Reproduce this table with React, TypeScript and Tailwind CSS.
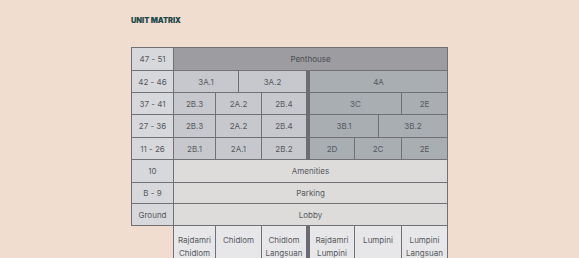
const border = "border-r border-b border-[#707075]";

const Cell = ({
  w,
  bg,
  children,
  className = "",
}: {
  w: string;
  bg: string;
  children?: React.ReactNode;
  className?: string;
}) => (
  <div className={`${w} ${bg} ${border} flex items-center justify-center shrink-0 ${className}`}>
    {children}
  </div>
);

const Divider = () => <div className="w-[4px] shrink-0 bg-[#6c6c72] border-b border-[#6c6c72]" />;

const leftRows = [
  { label: "37 - 41", h: "h-[22px]", left: ["2B.3", "2A.2", "2B.4"], right: [["3C", "w-[92px]"], ["2E", "w-[46px]"]] },
  { label: "27 - 36", h: "h-[23px]", left: ["2B.3", "2A.2", "2B.4"], right: [["3B.1", "w-[69px]"], ["3B.2", "w-[69px]"]] },
  { label: "11 - 26", h: "h-[22px]", left: ["2B.1", "2A.1", "2B.2"], right: [["2D", "w-[45px]"], ["2C", "w-[47px]"], ["2E", "w-[46px]"]] },
];

const leftWidths = ["w-[42px]", "w-[46px]", "w-[44px]"];

const wideRows = [
  { label: "10", text: "Amenities", h: "h-[23px]" },
  { label: "B - 9", text: "Parking", h: "h-[21px]" },
  { label: "Ground", text: "Lobby", h: "h-[22px]" },
];

const stations = [
  ["Rajdamri", "Chidlom"],
  ["Chidlom"],
  ["Chidlom", "Langsuan"],
];
const stationsRight = [
  ["Rajdamri", "Lumpini"],
  ["Lumpini"],
  ["Lumpini", "Langsuan"],
];
const rightWidths = ["w-[45px]", "w-[47px]", "w-[46px]"];

export default function App() {
  return (
    <div
      className="w-[579px] h-[258px] overflow-hidden bg-[#f0ddd0] text-[#56585d] text-[8px]"
      style={{ fontFamily: "Inter, 'Liberation Sans', sans-serif" }}
    >
      <div className="pl-[131px] pt-[16px]">
        <h2 className="text-[7.5px] font-black tracking-[-0.01em] text-[#1e4a4a] leading-[10px]">
          UNIT MATRIX
        </h2>
      </div>
      <div className="ml-[131px] mt-[21px] w-[317px]">
        <div className="border-l border-t border-[#707075]">
          {/* 47 - 51 */}
          <div className="flex h-[23px]">
            <Cell w="w-[42px]" bg="bg-[#d7d8dc]">47 - 51</Cell>
            <Cell w="w-[274px]" bg="bg-[#9c9ca1]" className="text-[#4a4b50]">Penthouse</Cell>
          </div>
          {/* 42 - 46 */}
          <div className="flex h-[22px]">
            <Cell w="w-[42px]" bg="bg-[#d7d8dc]">42 - 46</Cell>
            <Cell w="w-[65px]" bg="bg-[#c7c8cd]">3A.1</Cell>
            <Cell w="w-[67px]" bg="bg-[#c7c8cd]" className="border-r-0">3A.2</Cell>
            <Divider />
            <Cell w="w-[138px]" bg="bg-[#a9aeb3]">4A</Cell>
          </div>
          {leftRows.map((row) => (
            <div key={row.label} className={`flex ${row.h}`}>
              <Cell w="w-[42px]" bg="bg-[#d7d8dc]">{row.label}</Cell>
              {row.left.map((t, i) => (
                <Cell
                  key={i}
                  w={leftWidths[i]}
                  bg="bg-[#c7c8cd]"
                  className={i === 2 ? "border-r-0" : ""}
                >
                  {t}
                </Cell>
              ))}
              <Divider />
              {row.right.map(([t, w], i) => (
                <Cell key={i} w={w} bg="bg-[#a9aeb3]">
                  {t}
                </Cell>
              ))}
            </div>
          ))}
          {wideRows.map((row) => (
            <div key={row.label} className={`flex ${row.h}`}>
              <Cell w="w-[42px]" bg="bg-[#d7d8dc]">{row.label}</Cell>
              <Cell w="w-[274px]" bg="bg-[#dddcdb]">{row.text}</Cell>
            </div>
          ))}
        </div>
        {/* stations */}
        <div className="flex ml-[42px] h-[40px] border-l border-[#707075]">
          {stations.map((lines, i) => (
            <div
              key={i}
              className={`${leftWidths[i]} shrink-0 bg-[#e7e7e9] ${i < 2 ? "border-r border-[#707075]" : ""} flex flex-col items-center pt-[8px] leading-[13px]`}
            >
              {lines.map((l) => (
                <span key={l}>{l}</span>
              ))}
            </div>
          ))}
          <div className="w-[4px] shrink-0 bg-[#6c6c72]" />
          {stationsRight.map((lines, i) => (
            <div
              key={i}
              className={`${rightWidths[i]} shrink-0 bg-[#e7e7e9] border-r border-[#707075] flex flex-col items-center pt-[8px] leading-[13px]`}
            >
              {lines.map((l) => (
                <span key={l}>{l}</span>
              ))}
            </div>
          ))}
        </div>
      </div>
    </div>
  );
}
